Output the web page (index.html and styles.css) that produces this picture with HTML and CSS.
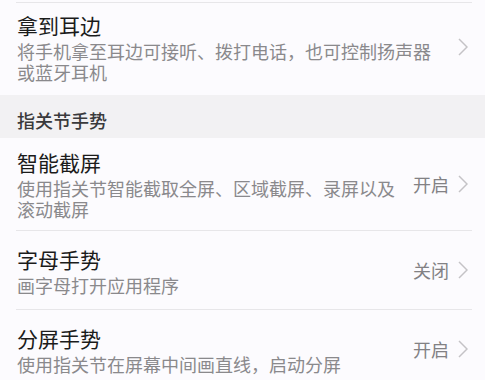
FILE: index.html
```html
<!DOCTYPE html>
<html lang="zh">
<head>
<meta charset="utf-8">
<link rel="stylesheet" href="styles.css">
</head>
<body>
<div class="page">
  <div class="divider top"></div>
  <div class="item first">
    <div class="text">
      <div class="title">拿到耳边</div>
      <div class="sub">将手机拿至耳边可接听、拨打电话，也可控制扬声器或蓝牙耳机</div>
    </div>
    <div class="right">
      <svg class="chev" viewBox="0 0 10 18" width="10" height="18"><path d="M1 1 L9 9 L1 17" fill="none" stroke="#c4c3c6" stroke-width="1.5"/></svg>
    </div>
  </div>
  <div class="section">指关节手势</div>
  <div class="item">
    <div class="text">
      <div class="title">智能截屏</div>
      <div class="sub">使用指关节智能截取全屏、区域截屏、录屏以及滚动截屏</div>
    </div>
    <div class="right">
      <span class="value">开启</span>
      <svg class="chev" viewBox="0 0 10 18" width="10" height="18"><path d="M1 1 L9 9 L1 17" fill="none" stroke="#c4c3c6" stroke-width="1.5"/></svg>
    </div>
  </div>
  <div class="divider"></div>
  <div class="item">
    <div class="text">
      <div class="title">字母手势</div>
      <div class="sub">画字母打开应用程序</div>
    </div>
    <div class="right">
      <span class="value">关闭</span>
      <svg class="chev" viewBox="0 0 10 18" width="10" height="18"><path d="M1 1 L9 9 L1 17" fill="none" stroke="#c4c3c6" stroke-width="1.5"/></svg>
    </div>
  </div>
  <div class="divider"></div>
  <div class="item">
    <div class="text">
      <div class="title">分屏手势</div>
      <div class="sub">使用指关节在屏幕中间画直线，启动分屏</div>
    </div>
    <div class="right">
      <span class="value">开启</span>
      <svg class="chev" viewBox="0 0 10 18" width="10" height="18"><path d="M1 1 L9 9 L1 17" fill="none" stroke="#c4c3c6" stroke-width="1.5"/></svg>
    </div>
  </div>
</div>
</body>
</html>
```

FILE: styles.css
```css
html, body {
  margin: 0;
  padding: 0;
  background: #fcfbfe;
}
body {
  font-family: "Noto Sans CJK SC", "Noto Sans", sans-serif;
  width: 485px;
  height: 380px;
  overflow: hidden;
}
.page {
  padding-top: 2px;
}
.divider {
  height: 1px;
  background: #e7e6e9;
  margin: 0 13px 0 16px;
}
.item {
  display: flex;
  align-items: center;
  box-sizing: border-box;
  min-height: 78px;
  padding: 10px 17px 10px 17px;
}
.item.first {
  padding-top: 8px;
  padding-bottom: 12px;
}
.text {
  flex: 1;
  min-width: 0;
  margin-right: 12px;
}
.title {
  font-size: 21px;
  line-height: 28px;
  color: #1b1b1b;
}
.sub {
  margin-top: 2px;
  font-size: 18px;
  line-height: 21px;
  color: #8a898c;
}
.right {
  display: flex;
  align-items: center;
  gap: 9px;
}
.value {
  font-size: 18px;
  line-height: 21px;
  color: #828184;
}
.chev {
  display: block;
}
.section {
  background: #f2f1f3;
  height: 43px;
  box-sizing: border-box;
  padding: 15px 17px 0;
  font-size: 18px;
  line-height: 21px;
  font-weight: 500;
  color: #3a3a3c;
}
```
